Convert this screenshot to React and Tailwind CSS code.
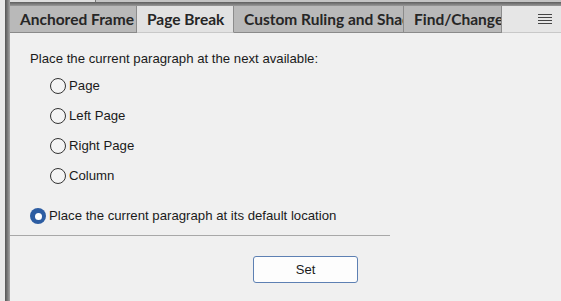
import React from "react";

const tabs = [
  { label: "Anchored Frame", w: "w-[127px]", active: false },
  { label: "Page Break", w: "w-[97px]", active: true },
  { label: "Custom Ruling and Shading", w: "w-[170px]", active: false },
  { label: "Find/Change", w: "w-[98px]", active: false },
];

const options = ["Page", "Left Page", "Right Page", "Column"];

function Radio({ label }) {
  return (
    <div className="flex items-center h-[30px]">
      <span className="w-[16px] h-[16px] rounded-full border border-[#333] bg-[#f4f4f4]" />
      <span className="ml-[3px]">{label}</span>
    </div>
  );
}

export default function App() {
  return (
    <div
      className="w-[561px] h-[301px] flex bg-[#f0f0f0] overflow-hidden text-[13.2px] text-[#1a1a1a]"
      style={{ fontFamily: '"Liberation Sans", Arial, sans-serif' }}
    >
      {/* left frame */}
      <div className="w-[5px] bg-[#e9e9e9]" />
      <div className="w-[5px] bg-gradient-to-r from-[#555] via-[#7a7a7a] to-[#a5a5a5]" />

      <div className="flex-1 flex flex-col">
        {/* top frame lines */}
        <div className="h-[2px] flex">
          <div className="w-[85px] bg-[#dedede]" />
          <div className="w-[1px] bg-[#777]" />
          <div className="flex-1 bg-[#c4c4c4]" />
        </div>
        <div className="h-[4px] bg-gradient-to-b from-[#5e5e5e] to-[#9a9a9a]" />

        {/* tabs */}
        <div
          className="h-[27px] flex bg-[#e6e6e6]"
          style={{ fontFamily: "Lato, 'Open Sans', sans-serif" }}
        >
          {tabs.map((t) => (
            <div
              key={t.label}
              className={`${t.w} shrink-0 overflow-hidden whitespace-nowrap pl-[10px] pt-[1px] flex items-center text-[15.5px] font-bold text-[#262626] border-r border-[#8c8c8c] ${
                t.active ? "bg-[#e2e2e2] border-b border-b-[#c8c8c8]" : "bg-[#b9b9b9] border-b border-b-[#8a8a8a]"
              }`}
            >
              {t.label}
            </div>
          ))}
          <div className="flex-1 flex items-center justify-end pr-[9px] border-b border-b-[#c8c8c8]">
            <div className="flex flex-col gap-[1.5px]">
              <span className="block w-[14px] h-[1.5px] bg-[#444]" />
              <span className="block w-[14px] h-[1.5px] bg-[#444]" />
              <span className="block w-[14px] h-[1.5px] bg-[#444]" />
              <span className="block w-[14px] h-[1.5px] bg-[#444]" />
            </div>
          </div>
        </div>

        {/* content */}
        <div className="flex-1 flex flex-col">
          <div className="pl-[20px] mt-[18px] leading-[16px]">
            Place the current paragraph at the next available:
          </div>
          <div className="pl-[40px] mt-[4px] flex flex-col">
            {options.map((o) => (
              <Radio key={o} label={o} />
            ))}
          </div>
          <div className="pl-[20px] mt-[15px] flex items-center h-[20px]">
            <span className="w-[16px] h-[16px] rounded-full bg-[#2d5da2] flex items-center justify-center">
              <span className="w-[7px] h-[7px] rounded-full bg-white" />
            </span>
            <span className="ml-[3px]">Place the current paragraph at its default location</span>
          </div>
          <div className="mt-[9px] w-[380px] h-[1px] bg-[#a8a8a8]" />
          <div className="pl-[243px] mt-[20px]">
            <button className="w-[105px] h-[27px] rounded-[3px] border border-[#5d80b3] bg-[#fdfdfd] text-[13px] text-[#1a1a1a]">
              Set
            </button>
          </div>
        </div>
      </div>
    </div>
  );
}
